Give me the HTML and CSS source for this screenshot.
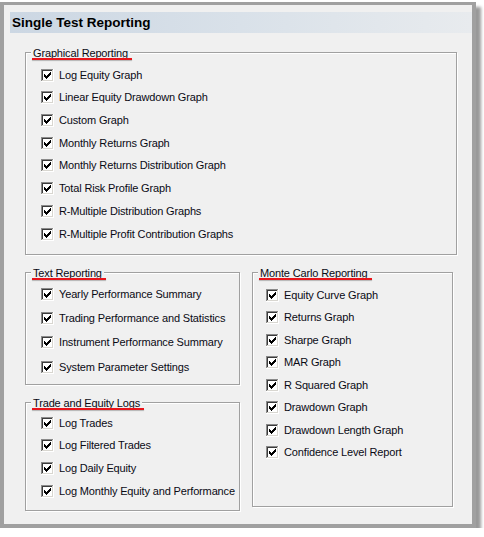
FILE: index.html
```html
<!DOCTYPE html>
<html>
<head>
<meta charset="utf-8">
<link rel="stylesheet" href="styles.css">
</head>
<body>
<svg class="defs" width="0" height="0" aria-hidden="true">
  <defs>
    <symbol id="cbx" viewBox="0 0 13 13">
      <rect x="0" y="0" width="13" height="13" fill="#ffffff"/>
      <path d="M0 0h12v1H1v11H0z" fill="#8a8a8a"/>
      <path d="M12 0h1v13H0v-1h12z" fill="#ffffff"/>
      <path d="M1 1h10v1H2v9H1z" fill="#3c3c3c"/>
      <path d="M11 1h1v11H1v-1h10z" fill="#d8d6d0"/>
      <path d="M9 3h1v1H9z M8 4h2v1H8z M3 5h1v1H3z M7 5h3v1H7z M3 6h2v1H3z M6 6h3v1H6z M3 7h5v1H3z M4 8h3v1H4z M5 9h1v1H5z" fill="#000000"/>
    </symbol>
  </defs>
</svg>
<div class="frame">
  <div class="header"><span class="title">Single Test Reporting</span></div>
  <div class="content">
    <div class="group g-graph">
      <div class="legend">Graphical Reporting</div>
      <ul class="list">
        <li class="item"><svg class="cb"><use href="#cbx"/></svg><span>Log Equity Graph</span></li>
        <li class="item"><svg class="cb"><use href="#cbx"/></svg><span>Linear Equity Drawdown Graph</span></li>
        <li class="item"><svg class="cb"><use href="#cbx"/></svg><span>Custom Graph</span></li>
        <li class="item"><svg class="cb"><use href="#cbx"/></svg><span>Monthly Returns Graph</span></li>
        <li class="item"><svg class="cb"><use href="#cbx"/></svg><span>Monthly Returns Distribution Graph</span></li>
        <li class="item"><svg class="cb"><use href="#cbx"/></svg><span>Total Risk Profile Graph</span></li>
        <li class="item"><svg class="cb"><use href="#cbx"/></svg><span>R-Multiple Distribution Graphs</span></li>
        <li class="item"><svg class="cb"><use href="#cbx"/></svg><span>R-Multiple Profit Contribution Graphs</span></li>
      </ul>
    </div>
    <div class="cols">
      <div class="col-left">
        <div class="group g-text">
          <div class="legend">Text Reporting</div>
          <ul class="list">
            <li class="item"><svg class="cb"><use href="#cbx"/></svg><span>Yearly Performance Summary</span></li>
            <li class="item"><svg class="cb"><use href="#cbx"/></svg><span>Trading Performance and Statistics</span></li>
            <li class="item"><svg class="cb"><use href="#cbx"/></svg><span>Instrument Performance Summary</span></li>
            <li class="item"><svg class="cb"><use href="#cbx"/></svg><span>System Parameter Settings</span></li>
          </ul>
        </div>
        <div class="group g-trade">
          <div class="legend">Trade and Equity Logs</div>
          <ul class="list">
            <li class="item"><svg class="cb"><use href="#cbx"/></svg><span>Log Trades</span></li>
            <li class="item"><svg class="cb"><use href="#cbx"/></svg><span>Log Filtered Trades</span></li>
            <li class="item"><svg class="cb"><use href="#cbx"/></svg><span>Log Daily Equity</span></li>
            <li class="item"><svg class="cb"><use href="#cbx"/></svg><span>Log Monthly Equity and Performance</span></li>
          </ul>
        </div>
      </div>
      <div class="group g-monte">
        <div class="legend">Monte Carlo Reporting</div>
        <ul class="list">
          <li class="item"><svg class="cb"><use href="#cbx"/></svg><span>Equity Curve Graph</span></li>
          <li class="item"><svg class="cb"><use href="#cbx"/></svg><span>Returns Graph</span></li>
          <li class="item"><svg class="cb"><use href="#cbx"/></svg><span>Sharpe Graph</span></li>
          <li class="item"><svg class="cb"><use href="#cbx"/></svg><span>MAR Graph</span></li>
          <li class="item"><svg class="cb"><use href="#cbx"/></svg><span>R Squared Graph</span></li>
          <li class="item"><svg class="cb"><use href="#cbx"/></svg><span>Drawdown Graph</span></li>
          <li class="item"><svg class="cb"><use href="#cbx"/></svg><span>Drawdown Length Graph</span></li>
          <li class="item"><svg class="cb"><use href="#cbx"/></svg><span>Confidence Level Report</span></li>
        </ul>
      </div>
    </div>
  </div>
</div>
</body>
</html>
```
FILE: styles.css
```css
* { box-sizing: border-box; }
html, body { margin: 0; padding: 0; background: #ffffff; }
body {
  font-family: "Liberation Sans", Arial, sans-serif;
  font-size: 11px;
  letter-spacing: -0.15px;
  color: #0a0a14;
}
.defs { position: absolute; width: 0; height: 0; overflow: hidden; }

.frame {
  margin-top: 2px;
  width: 476px;
  height: 526px;
  border-style: solid;
  border-color: #a0a0a0;
  border-width: 3px 4px 4px 4px;
  background: #f0f0f0;
  box-shadow: 5px 5px 3px rgba(0, 0, 0, 0.4);
}

.header {
  margin: 7px 0 0 6px;
  height: 21px;
  line-height: 21px;
  padding-left: 2px;
  background: linear-gradient(to right, #ccd7e3 0%, #d9e1e9 50%, #e8ebee 100%);
}
.title {
  font-size: 13.5px;
  font-weight: bold;
  letter-spacing: 0;
  color: #000;
}

.content {
  padding-left: 21px;
}

.group {
  display: flex;
  flex-direction: column;
  border: 1px solid #a0a0a0;
  box-shadow: 1px 1px 0 #ffffff, inset 1px 1px 0 #ffffff;
}
.legend {
  position: relative;
  align-self: flex-start;
  margin: -7px 0 0 5px;
  padding: 0 2px;
  height: 14px;
  line-height: 14px;
  background: #f0f0f0;
  white-space: nowrap;
}
.legend::after {
  content: "";
  position: absolute;
  left: 1px;
  right: -2px;
  top: 12px;
  height: 2px;
  background: #e8141a;
  box-shadow: 0 1px 1px rgba(0, 0, 0, 0.25);
}

.list {
  list-style: none;
  margin: 0;
  padding: 0 0 0 15px;
  display: flex;
  flex-direction: column;
}
.item {
  display: flex;
  align-items: center;
  gap: 5px;
  height: 13px;
  line-height: 13px;
  white-space: nowrap;
}
.cb {
  width: 13px;
  height: 13px;
  flex: none;
  display: block;
}

.g-graph {
  margin-top: 19px;
  width: 432px;
  padding-bottom: 13.4px;
}
.g-graph .list { margin-top: 8.7px; gap: 9.7px; }

.cols {
  display: flex;
  align-items: flex-start;
  margin-top: 17px;
}
.col-left {
  width: 215px;
  display: flex;
  flex-direction: column;
  gap: 17px;
}
.g-text { padding-bottom: 10.3px; }
.g-text .list { margin-top: 7.8px; gap: 11.3px; }

.g-trade { padding-bottom: 11.8px; }
.g-trade .list { margin-top: 6.8px; gap: 9.8px; }

.g-monte {
  width: 201px;
  margin-left: 12px;
  padding-bottom: 46.7px;
}
.g-monte .list { margin-top: 8.8px; gap: 9.5px; padding-left: 13px; }
```
